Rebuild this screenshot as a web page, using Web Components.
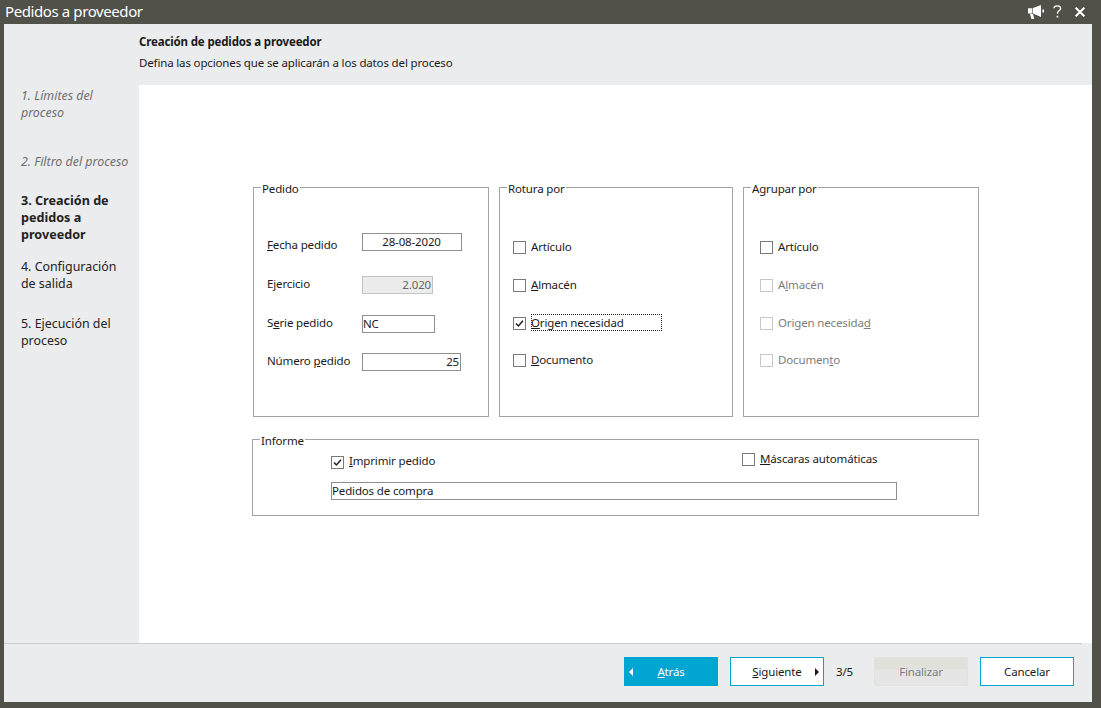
<!DOCTYPE html>
<html>
<head>
<meta charset="utf-8">
<title>Pedidos a proveedor</title>
<style>
  html, body { margin: 0; height: 100%; }
  body { font: 11.5px/17px "Noto Sans", "Liberation Sans", sans-serif; letter-spacing: -0.15px; color: #1a1a1a; }
  .form { display: flex; flex-direction: column; }
  .groups { display: flex; gap: 10px; margin-left: 1px; }
  .informe-top { display: grid; grid-template-columns: 411px auto; align-items: start; height: 22px; }
  .shift-label { --label-pad: 4px 0 0 0; }
</style>
</head>
<body>
<wizard-window>
  <span slot="title">Pedidos a proveedor</span>

  <span slot="heading">Creación de pedidos a proveedor</span>
  <span slot="subheading">Defina las opciones que se aplicarán a los datos del proceso</span>

  <wizard-step slot="steps" state="done" style="margin-top:63px">1. Límites del proceso</wizard-step>
  <wizard-step slot="steps" state="done" style="margin-top:32px">2. Filtro del proceso</wizard-step>
  <wizard-step slot="steps" state="current" style="margin-top:22px">3. Creación de pedidos a proveedor</wizard-step>
  <wizard-step slot="steps" style="margin-top:15px">4. Configuración de salida</wizard-step>
  <wizard-step slot="steps" style="margin-top:23px">5. Ejecución del proceso</wizard-step>

  <div slot="body" class="form">
    <div class="groups">
      <group-box label="Pedido" style="width:236px;height:240px" pad="35px 0 0 13px">
        <form-field class="shift-label" value="28-08-2020" width="100" talign="center"><u>F</u>echa pedido</form-field>
        <form-field style="margin-top:25px" value="2.020" width="71" talign="right" disabled>Ejercicio</form-field>
        <form-field style="margin-top:21px" value="NC" width="73">S<u>e</u>rie pedido</form-field>
        <form-field style="margin-top:20px" value="25" width="99" talign="right">Número <u>p</u>edido</form-field>
      </group-box>
      <group-box label="Rotura por" style="width:234px;height:240px" pad="40px 0 0 13px">
        <check-row>Artículo</check-row>
        <check-row style="margin-top:19px"><u>A</u>lmacén</check-row>
        <check-row style="margin-top:19px" checked focused><u>O</u>rigen necesidad</check-row>
        <check-row style="margin-top:18px"><u>D</u>ocumento</check-row>
      </group-box>
      <group-box label="Agrupar por" style="width:236px;height:240px" pad="40px 0 0 16px">
        <check-row>Artículo</check-row>
        <check-row style="margin-top:19px" disabled>A<u>l</u>macén</check-row>
        <check-row style="margin-top:19px" disabled>Origen necesida<u>d</u></check-row>
        <check-row style="margin-top:18px" disabled>Documen<u>t</u>o</check-row>
      </group-box>
    </div>
    <group-box label="Informe" style="width:727px;height:87px;margin-top:12px" pad="0 0 0 78px">
      <div class="informe-top">
        <check-row checked style="margin-top:3px;--text-pad:0 0 4px 0"><u>I</u>mprimir pedido</check-row>
        <check-row><u>M</u>áscaras automáticas</check-row>
      </div>
      <text-box value="Pedidos de compra" width="566" style="margin-top:10px"></text-box>
    </group-box>
  </div>

  <wizard-button slot="footer" variant="primary" arrow="left"><u>A</u>trás</wizard-button>
  <wizard-button slot="footer" arrow="right" style="margin-left:12px"><u>S</u>iguiente</wizard-button>
  <span slot="footer" class="counter" style="margin-left:12px;width:38px">3/5</span>
  <wizard-button slot="footer" disabled>Finalizar</wizard-button>
  <wizard-button slot="footer" style="margin-left:12px">Cancelar</wizard-button>
</wizard-window>

<script>
class WizardWindow extends HTMLElement {
  constructor() {
    super()
    this.shadow = this.attachShadow({ mode: 'open' })
  }
  connectedCallback() {
    this.shadow.innerHTML = /*html*/`
      <style>
        :host {
          display: flex;
          flex-direction: column;
          width: 1101px;
          height: 708px;
          box-sizing: border-box;
          padding: 0 9px 6px 4px;
          background: #51514a;
        }
        .titlebar {
          height: 24px;
          display: flex;
          align-items: center;
          justify-content: space-between;
          color: #fff;
          font-size: 15px;
          letter-spacing: -0.4px;
          margin: 0 -9px 0 1px;
          padding-bottom: 1px;
          box-sizing: border-box;
        }
        .icons { display: flex; align-items: center; margin-right: 16px; }
        .icons .help { margin: 0 13px 0 9px; }
        .panel {
          flex: 1;
          display: grid;
          grid-template-columns: 135px 1fr;
          grid-template-rows: 61px 1fr 59px;
          background: #ebecee;
          min-height: 0;
        }
        .steps { grid-row: 1 / 3; padding-left: 17px; }
        .head { padding-top: 9px; }
        .head .title { font-weight: 700; display: block; }
        .head .sub { display: block; margin-top: 4px; }
        .body { background: #fff; padding: 92px 0 0 113px; }
        .foot { grid-column: 1 / 3; display: flex; flex-direction: column; }
        .rule { height: 1px; background: #cbcbcb; margin-right: 10px; }
        .buttons { display: flex; justify-content: flex-end; padding: 13px 18px 0 0; }
        ::slotted(.counter) { line-height: 29px; }
      </style>
      <div class="titlebar">
        <slot name="title"></slot>
        <div class="icons">
          <svg width="16" height="14" viewBox="0 0 16 14"><path fill="#fff" d="M0 3.3H4.4V8.6H0ZM5 3 13 0V12L5 8.6ZM2 9H5L6.3 14H3.4ZM14.4 4.4H16V7.6H14.4Z"/></svg>
          <svg class="help" width="9" height="13" viewBox="0 0 9 13"><path fill="none" stroke="#fff" stroke-width="1.3" d="M1 3.2C1 1.6 2.6 .8 4.3 .8 6.2 .8 7.6 1.9 7.6 3.4 7.6 5.6 4.4 5.6 4.4 8.8"/><rect x="3.6" y="10.8" width="1.7" height="1.7" fill="#fff"/></svg>
          <svg width="10" height="10" viewBox="0 0 10 10"><path fill="none" stroke="#fff" stroke-width="2" d="M.6 .6 9.4 9.4M9.4 .6 .6 9.4"/></svg>
        </div>
      </div>
      <div class="panel">
        <div class="steps"><slot name="steps"></slot></div>
        <div class="head">
          <span class="title"><slot name="heading"></slot></span>
          <span class="sub"><slot name="subheading"></slot></span>
        </div>
        <div class="body"><slot name="body"></slot></div>
        <div class="foot">
          <div class="rule"></div>
          <div class="buttons"><slot name="footer"></slot></div>
        </div>
      </div>
    `
  }
}
customElements.define('wizard-window', WizardWindow);

class WizardStep extends HTMLElement {
  constructor() {
    super()
    this.shadow = this.attachShadow({ mode: 'open' })
  }
  connectedCallback() {
    this.shadow.innerHTML = `
      <style>
        :host { display: block; width: 111px; font-size: 12.4px; letter-spacing: 0; color: #222; }
        :host([state="done"]) { font-style: italic; color: #6f6f6f; }
        :host([state="current"]) { font-weight: 700; font-size: 12.6px; }
      </style>
      <slot></slot>
    `
  }
}
customElements.define('wizard-step', WizardStep);

class GroupBox extends HTMLElement {
  constructor() {
    super()
    this.shadow = this.attachShadow({ mode: 'open' })
  }
  connectedCallback() {
    this.shadow.innerHTML = `
      <style>
        :host { display: block; }
        fieldset {
          box-sizing: border-box;
          height: 100%;
          min-width: 0;
          margin: 0;
          padding: 0;
          border: 1px solid #a3a3a3;
        }
        legend { padding: 3px 1px 1px; margin-left: 7px; }
        .content { padding: ${this.getAttribute('pad') || '0'}; }
      </style>
      <fieldset>
        <legend>${this.getAttribute('label')}</legend>
        <div class="content"><slot></slot></div>
      </fieldset>
    `
  }
}
customElements.define('group-box', GroupBox);

class TextBox extends HTMLElement {
  constructor() {
    super()
    this.shadow = this.attachShadow({ mode: 'open' })
  }
  connectedCallback() {
    this.shadow.innerHTML = `
      <style>
        :host { display: block; width: ${this.getAttribute('width')}px; }
        div {
          box-sizing: border-box;
          height: 18px;
          border: 1px solid #8f8f8f;
          background: #fff;
          padding: 0 1px 0 0;
          line-height: 16px;
          text-align: ${this.getAttribute('talign') || 'left'};
        }
        :host([disabled]) div { background: #ececec; border-color: #c4c4c4; color: #666; }
      </style>
      <div>${this.getAttribute('value')}</div>
    `
  }
}
customElements.define('text-box', TextBox);

class FormField extends HTMLElement {
  constructor() {
    super()
    this.shadow = this.attachShadow({ mode: 'open' })
  }
  connectedCallback() {
    const disabled = this.hasAttribute('disabled') ? 'disabled' : ''
    this.shadow.innerHTML = `
      <style>
        :host { display: flex; align-items: center; height: 18px; }
        .label { width: 95px; flex: none; padding: var(--label-pad, 0 0 4px 0); }
      </style>
      <span class="label"><slot></slot></span>
      <text-box ${disabled} width="${this.getAttribute('width')}" value="${this.getAttribute('value')}" talign="${this.getAttribute('talign') || 'left'}"></text-box>
    `
  }
}
customElements.define('form-field', FormField);

class CheckRow extends HTMLElement {
  constructor() {
    super()
    this.shadow = this.attachShadow({ mode: 'open' })
  }
  connectedCallback() {
    const tick = this.hasAttribute('checked')
      ? '<svg width="11" height="11" viewBox="0 0 11 11"><path fill="none" stroke="#222" stroke-width="1.5" d="M2 5.5 4.4 8 9 2.8"/></svg>'
      : ''
    this.shadow.innerHTML = `
      <style>
        :host { display: flex; align-items: center; height: 19px; }
        :host([disabled]) { color: #7d7d7d; }
        .box {
          box-sizing: border-box;
          flex: none;
          width: 13px;
          height: 13px;
          border: 1px solid #7a7a7a;
          background: #fff;
          display: flex;
          margin-right: 5px;
        }
        :host([disabled]) .box { border-color: #c8c8c8; }
        .text { padding: var(--text-pad, 0 0 2px 0); }
        :host([focused]) .text {
          align-self: flex-start;
          width: 131px;
          height: 17px;
          padding: 0;
          outline: 1px dotted #222;
          outline-offset: -1px;
        }
      </style>
      <span class="box">${tick}</span>
      <span class="text"><slot></slot></span>
    `
  }
}
customElements.define('check-row', CheckRow);

class WizardButton extends HTMLElement {
  constructor() {
    super()
    this.shadow = this.attachShadow({ mode: 'open' })
  }
  connectedCallback() {
    const arrow = this.getAttribute('arrow')
    const left = arrow === 'left' ? '<svg class="arr l" width="4" height="8" viewBox="0 0 4 8"><path d="M4 0V8L0 4Z" fill="currentColor"/></svg>' : ''
    const right = arrow === 'right' ? '<svg class="arr r" width="4" height="8" viewBox="0 0 4 8"><path d="M0 0V8L4 4Z" fill="currentColor"/></svg>' : ''
    this.shadow.innerHTML = `
      <style>
        :host {
          display: flex;
          align-items: center;
          justify-content: center;
          position: relative;
          box-sizing: border-box;
          width: 94px;
          height: 29px;
          border: 1px solid #00a5d1;
          background: #fff;
          color: #1a1a1a;
        }
        :host([variant="primary"]) { background: #00a5d1; color: #fff; }
        :host([disabled]) {
          background: linear-gradient(#e1e1dc 0 40%, #e5e5e5 40%);
          border-color: #e2e2e0;
          color: #7d7d7d;
        }
        .arr { position: absolute; top: 10px; }
        .l { left: 4px; }
        .r { right: 4px; }
      </style>
      ${left}<slot></slot>${right}
    `
  }
}
customElements.define('wizard-button', WizardButton);
</script>
</body>
</html>
